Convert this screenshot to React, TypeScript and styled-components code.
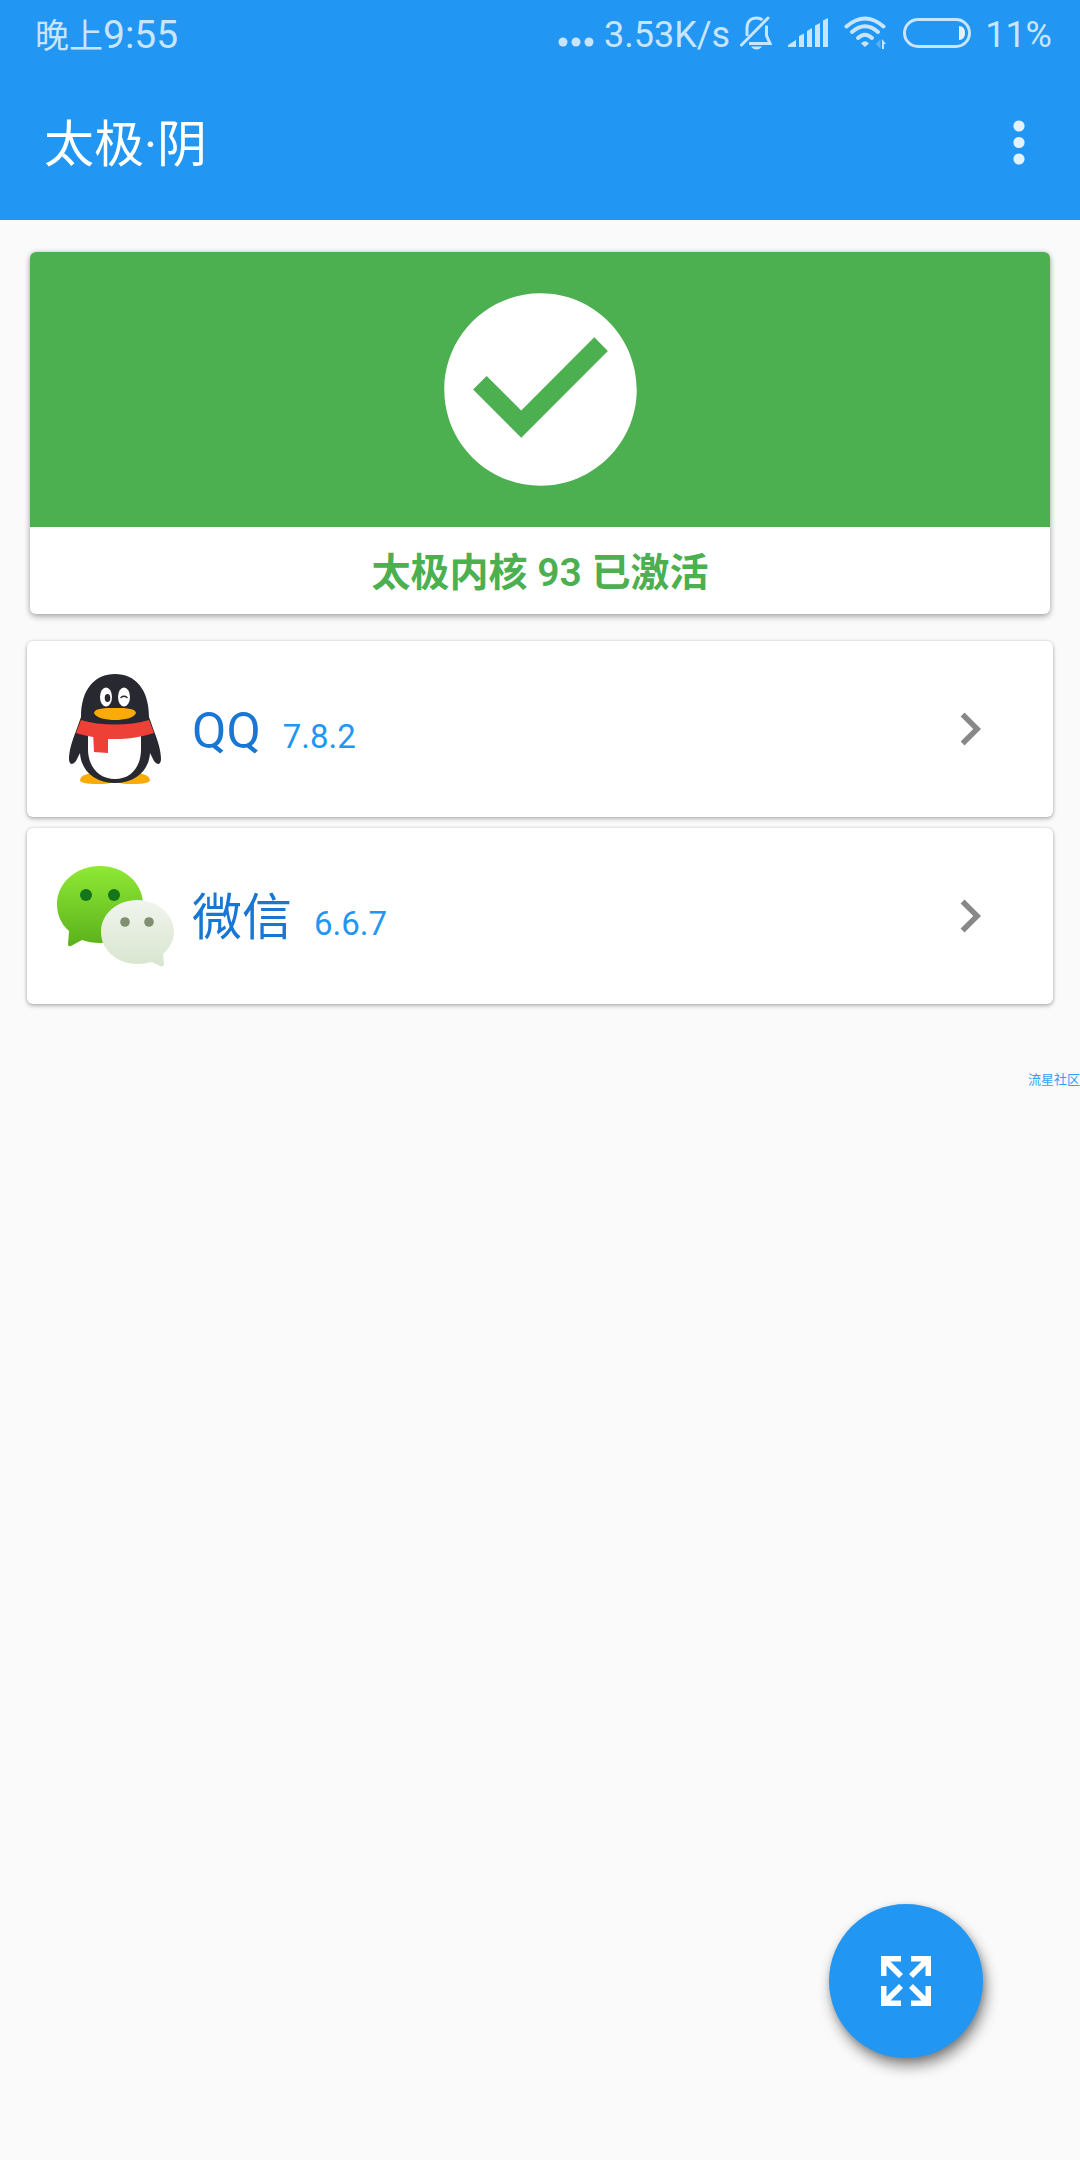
import React from 'react';
import styled, { createGlobalStyle } from 'styled-components';

const GlobalStyle = createGlobalStyle`
  *, *::before, *::after { box-sizing: border-box; }
  body {
    margin: 0;
    background: #fafafa;
    font-family: Roboto, "Noto Sans CJK SC", sans-serif;
    overflow-x: hidden;
  }
  button { font: inherit; border: 0; padding: 0; background: none; cursor: pointer; }
  svg { display: block; flex: none; }
`;

const Header = styled.header`
  background: #2196f3;
  color: #fff;
`;

const StatusBar = styled.div`
  height: 66px;
  padding: 0 28px 0 35px;
  display: flex;
  align-items: center;
  justify-content: space-between;
  color: #c8e5fc;
  font-size: 36px;
  line-height: 62px;
`;

const Clock = styled.time`
  padding-top: 4px;
  display: flex;
  align-items: baseline;
  font-size: 39px;
`;

const DayPart = styled.span`
  font-size: 34px;
`;

const Reading = styled.span`
  padding-top: 4px;
`;

const StatusGroup = styled.div<{ $gap: number }>`
  display: flex;
  align-items: center;
  gap: ${p => p.$gap}px;
`;

const AppBar = styled.div`
  height: 154px;
  padding: 0 28px 0 44px;
  display: flex;
  align-items: center;
  justify-content: space-between;
`;

const Title = styled.h1`
  margin: 0;
  padding-top: 4px;
  font-size: 50px;
  line-height: 60px;
  font-weight: 400;
`;

const MenuButton = styled.button`
  width: 66px;
  height: 66px;
  display: grid;
  place-items: center;
  color: #e3f1fd;
`;

const Content = styled.main`
  padding: 32px 27px;
`;

const StatusCard = styled.section`
  margin: 0 3px 27px;
  border-radius: 6px;
  overflow: hidden;
  background: #fff;
  color: #4caf50;
  box-shadow: 0 3px 6px rgba(0, 0, 0, 0.26), 0 0 5px rgba(0, 0, 0, 0.16);
`;

const StatusBanner = styled.div`
  padding: 22px;
  display: flex;
  justify-content: center;
  background: #4caf50;
  color: #fff;
`;

const StatusText = styled.p`
  margin: 0;
  padding-top: 5px;
  font-size: 39px;
  line-height: 82px;
  font-weight: 600;
  text-align: center;
`;

const AppList = styled.ul`
  margin: 0;
  padding: 0;
  list-style: none;
  display: grid;
  gap: 11px;
`;

const AppRow = styled.button`
  width: 100%;
  height: 176px;
  padding: 0 50px 0 28px;
  display: flex;
  align-items: center;
  gap: 17px;
  border-radius: 6px;
  background: #fff;
  text-align: left;
  box-shadow: 0 2px 4px rgba(0, 0, 0, 0.26), 0 0 3px rgba(0, 0, 0, 0.14);
`;

const AppLabel = styled.span`
  flex: 1;
  padding-top: 10px;
  display: flex;
  align-items: baseline;
  gap: 22px;
  line-height: 60px;
`;

const AppName = styled.span`
  color: #1976d2;
  font-size: 50px;
`;

const AppVersion = styled.span`
  color: #2196f3;
  font-size: 33px;
`;

const Watermark = styled.small`
  position: absolute;
  top: 1070px;
  right: 0;
  color: #2ea0f8;
  font-size: 13px;
  line-height: 20px;
`;

const Fab = styled.button`
  position: fixed;
  right: 97px;
  bottom: 102px;
  width: 154px;
  height: 154px;
  border-radius: 50%;
  display: grid;
  place-items: center;
  background: #2196f3;
  color: #fff;
  box-shadow: 3px 8px 14px rgba(0, 0, 0, 0.44), 1px 2px 6px rgba(0, 0, 0, 0.16);
`;

const MoreDots = () => (
  <svg width="36" height="32" viewBox="0 0 36 32" fill="currentColor" aria-hidden="true">
    <circle cx="5" cy="25" r="4.500" />
    <circle cx="18" cy="25" r="4.500" />
    <circle cx="31" cy="25" r="4.500" />
  </svg>
);

const BellOff = () => (
  <svg width="32" height="34" viewBox="0 0 32 34" fill="none" stroke="currentColor" strokeWidth="3" aria-hidden="true">
    <path d="M7 20V12C7 5.500 11 2 16.500 2C19 2 21 2.600 22.500 4" />
    <path d="M1.500 29L28 2" strokeLinecap="round" />
    <path d="M26.500 9.500V19.500L30 27.500H9" />
    <path d="M11 30.500H22Q20 33.500 16.500 33.500T11 30.500Z" fill="currentColor" stroke="none" />
  </svg>
);

const Signal = () => (
  <svg width="40" height="30" viewBox="0 0 40 30" fill="currentColor" aria-hidden="true">
    <path d="M0 29V27L8 22V29Z" />
    <path d="M11 29V18L16 15.500V29Z" />
    <path d="M19 29V13L24 10V29Z" />
    <path d="M27 29V7.500L32 5V29Z" />
    <path d="M35 29V2.500L40 0V29Z" />
  </svg>
);

const Wifi = () => (
  <svg width="43" height="34" viewBox="0 0 43 34" fill="none" stroke="currentColor" strokeWidth="4" strokeLinecap="round" aria-hidden="true">
    <path d="M2.500 10.500Q21 -5.500 39.500 10.500" />
    <path d="M8 16Q21 4.500 34 16" />
    <path d="M14 22Q21 15.500 28 22" />
    <path d="M21 31L17 27.500Q21 23 25 27.500Z" fill="currentColor" stroke="none" />
    <path d="M36.500 23V33L32 28Z" fill="currentColor" stroke="none" opacity="0.35" />
    <path d="M38 33V23L42 28H40V33Z" fill="currentColor" stroke="none" />
  </svg>
);

const Battery = () => (
  <svg width="68" height="30" viewBox="0 0 68 30" aria-hidden="true">
    <rect x="1.500" y="1.500" width="65" height="27" rx="13.500" fill="none" stroke="currentColor" strokeWidth="3" />
    <path d="M56 8C60 8 62 11 62 15S60 22 56 22Z" fill="#e3f1fd" />
  </svg>
);

const Overflow = () => (
  <svg width="12" height="46" viewBox="0 0 12 46" fill="currentColor" aria-hidden="true">
    <circle cx="6" cy="6" r="5.600" />
    <circle cx="6" cy="22.500" r="5.600" />
    <circle cx="6" cy="39" r="5.600" />
  </svg>
);

const CheckCircle = () => (
  <svg width="231" height="231" viewBox="0 0 24 24" fill="currentColor" aria-hidden="true">
    <path d="M12 2C6.480 2 2 6.480 2 12s4.480 10 10 10 10-4.480 10-10S17.520 2 12 2zm-2 15l-5-5 1.410-1.410L10 14.170l7.590-7.590L19 8l-9 9z" />
  </svg>
);

const Chevron = () => (
  <svg width="66" height="66" viewBox="0 0 24 24" fill="#888" aria-hidden="true">
    <path d="M10 6L8.590 7.410 13.170 12l-4.580 4.590L10 18l6-6z" />
  </svg>
);

const Expand = () => (
  <svg width="50" height="50" viewBox="0 0 50 50" fill="currentColor" aria-hidden="true">
    {[0, 90, 180, 270].map(angle => (
      <path key={angle} transform={`rotate(${angle} 25 25)`} d="M0 0H20V5.500H9.500L22 18L18 22L5.500 9.500V20H0Z" />
    ))}
  </svg>
);

const QQLogo = () => (
  <svg width="120" height="120" viewBox="0 0 120 120" aria-hidden="true">
    <path d="M25 111C26 106 33 104 40 104L62 110Q61 115 43 115Q25 115 25 111Z" fill="#faab07" />
    <path d="M95 111C94 106 87 104 80 104L58 110Q59 115 77 115Q95 115 95 111Z" fill="#faab07" />
    <path d="M26 48C26 20 40 5 60 5S94 20 94 48L99 62C103 72 106 82 106 90C106 95 103 97 99 92L95 84C94 102 80 114 60 114S26 102 25 84L21 92C17 97 14 95 14 90C14 82 17 72 21 62Z" fill="#282930" />
    <path d="M33 60H86V80C86 98 76 110 60 110S33 98 33 80Z" fill="#fff" />
    <path d="M26 51C46 57 74 57 94 51L99 64C82 70 56 72 38 68Q27 66 21 64Z" fill="#ed4037" />
    <path d="M38 62H53V84L39 83Z" fill="#ed4037" />
    <ellipse cx="51" cy="28" rx="6" ry="9.500" fill="#fff" />
    <ellipse cx="69" cy="28" rx="6" ry="9.500" fill="#fff" />
    <ellipse cx="52.500" cy="29" rx="2.800" ry="4" fill="#282930" />
    <path d="M66 28.500Q69 26 72 28.500" fill="none" stroke="#282930" strokeWidth="1.600" strokeLinecap="round" />
    <path d="M39 44C40 39 50 39 60 39S80 39 81 44C79 49 69 51 60 51S41 49 39 44Z" fill="#faab07" />
  </svg>
);

const WeChatLogo = () => (
  <svg width="120" height="120" viewBox="0 0 120 120" aria-hidden="true">
    <defs>
      <linearGradient id="wechat-green" x1="0" y1="0" x2="0" y2="1">
        <stop offset="0" stopColor="#8fe934" />
        <stop offset="1" stopColor="#5bb11c" />
      </linearGradient>
      <linearGradient id="wechat-pale" x1="0" y1="0" x2="0" y2="1">
        <stop offset="0" stopColor="#f1f5ed" />
        <stop offset="1" stopColor="#d8e5cf" />
      </linearGradient>
    </defs>
    <path d="M45 10C69 10 88 27 88 48S69 87 45 87Q35 87 27 84L16 90Q13 91 13 88L14 75C6 68 2 59 2 48C2 27 21 10 45 10Z" fill="url(#wechat-green)" />
    <path d="M82 44C62 44 46 58 46 76S62 108 82 108Q90 108 97 106L105 110Q109 111 109 108L108 98C115 92 119 84 119 76C119 58 102 44 82 44Z" fill="url(#wechat-pale)" />
    <circle cx="31" cy="39" r="6" fill="#15751a" />
    <circle cx="59" cy="39" r="6" fill="#15751a" />
    <circle cx="70" cy="66" r="4.800" fill="#7e9070" />
    <circle cx="94" cy="66" r="4.800" fill="#7e9070" />
  </svg>
);

const apps = [
  { name: 'QQ', version: '7.8.2', Logo: QQLogo },
  { name: '微信', version: '6.6.7', Logo: WeChatLogo },
];

export default function App() {
  return (
    <>
      <GlobalStyle />
      <Header>
        <StatusBar>
          <Clock>
            <DayPart>晚上</DayPart>9:55
          </Clock>
          <StatusGroup $gap={14}>
            <StatusGroup $gap={16}>
              <StatusGroup $gap={10}>
                <MoreDots />
                <Reading>3.53K/s</Reading>
                <BellOff />
              </StatusGroup>
              <Signal />
              <Wifi />
              <Battery />
            </StatusGroup>
            <Reading>11%</Reading>
          </StatusGroup>
        </StatusBar>
        <AppBar>
          <Title>太极·阴</Title>
          <MenuButton type="button" aria-label="更多选项">
            <Overflow />
          </MenuButton>
        </AppBar>
      </Header>
      <Content>
        <StatusCard>
          <StatusBanner>
            <CheckCircle />
          </StatusBanner>
          <StatusText>太极内核 93 已激活</StatusText>
        </StatusCard>
        <AppList>
          {apps.map(({ name, version, Logo }) => (
            <li key={name}>
              <AppRow type="button">
                <Logo />
                <AppLabel>
                  <AppName>{name}</AppName>
                  <AppVersion>{version}</AppVersion>
                </AppLabel>
                <Chevron />
              </AppRow>
            </li>
          ))}
        </AppList>
      </Content>
      <Watermark>流星社区</Watermark>
      <Fab type="button" aria-label="展开">
        <Expand />
      </Fab>
    </>
  );
}
